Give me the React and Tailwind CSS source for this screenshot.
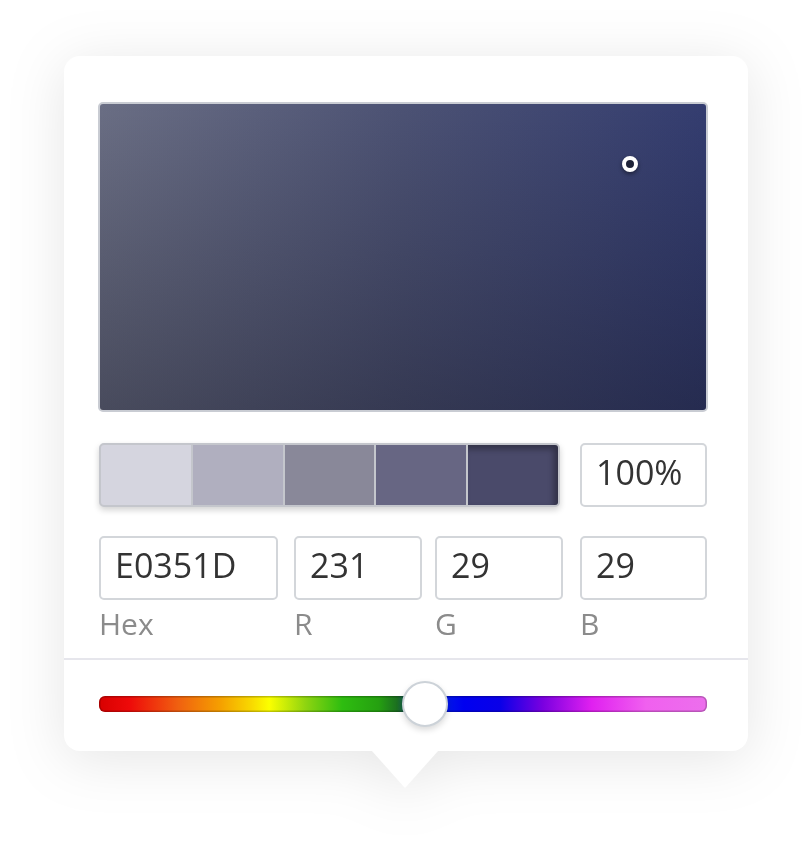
import React from 'react';

const swatches = ['#d5d5df', '#b0afbf', '#898899', '#676683', '#4a4a6a'];

const hueStops =
  'linear-gradient(to right, #d80000 0%, #ee0a0a 5%, #f06010 13%, #f5a000 20%, #f8d800 25%, #fbff00 28%, #8ed410 34%, #2ebd10 40%, #25a010 46%, #1c7020 49%, #0030e0 54%, #0000f0 60%, #0a00e8 66%, #7a00e0 73%, #e020f0 81%, #f060ef 90%, #ec6fec 100%)';

const Field = ({ value, label, width }) => (
  <div className={`flex flex-col ${width}`}>
    <div className="h-16 rounded-[5px] border-2 border-[#d3d6da] bg-white flex items-center pl-[14px] pb-[6px] text-[34px] text-[#333]">
      {value}
    </div>
    {label && <span className="mt-[6px] text-[30px] leading-[36px] text-[#8b8b8b]">{label}</span>}
  </div>
);

export default function App() {
  return (
    <div
      className="w-[812px] h-[852px] bg-white flex justify-center pt-[56px]"
      style={{ fontFamily: '"Open Sans", "Liberation Sans", sans-serif' }}
    >
      <div className="relative w-[684px] h-[732px] drop-shadow-[0_8px_28px_rgba(0,0,0,0.10)]">
        <div className="relative bg-white rounded-[16px] w-[684px] pt-[46px]">
          {/* saturation / brightness area */}
          <div className="pl-[34px] pr-[40px]">
            <div
              className="relative h-[310px] rounded-[5px] border-2 border-[#c9ccd3]"
              style={{
                background:
                  'linear-gradient(to bottom, rgba(0,0,0,0) 0%, rgba(10,10,20,0.35) 100%), linear-gradient(to right, #6a6e84 0%, #4c5274 50%, #343d70 100%)',
              }}
            >
              <div className="absolute left-[522px] top-[52px] w-[16px] h-[16px] rounded-full border-[4px] border-white bg-[#1e2238] shadow-[0_2px_4px_rgba(0,0,0,0.45)]" />
            </div>

            {/* swatches + opacity */}
            <div className="flex items-center mt-[31px] pl-[1px]">
              <div className="flex w-[461px] h-16 rounded-[5px] border-2 border-[#c4c6cc] overflow-hidden shadow-[0_3px_6px_rgba(0,0,0,0.18)] bg-[#c4c6cc] gap-[2px]">
                {swatches.map((c, i) => (
                  <div
                    key={c}
                    className={`flex-1 ${i === 4 ? 'shadow-[inset_-4px_4px_6px_rgba(0,0,0,0.35)]' : ''}`}
                    style={{ backgroundColor: c }}
                  />
                ))}
              </div>
              <div className="ml-[20px]">
                <Field value="100%" width="w-[127px]" />
              </div>
            </div>

            {/* hex / rgb */}
            <div className="flex mt-[29px] pl-[1px]">
              <Field value="E0351D" label="Hex" width="w-[179px]" />
              <div className="ml-[16px]">
                <Field value="231" label="R" width="w-[128px]" />
              </div>
              <div className="ml-[13px]">
                <Field value="29" label="G" width="w-[128px]" />
              </div>
              <div className="ml-[17px]">
                <Field value="29" label="B" width="w-[127px]" />
              </div>
            </div>
          </div>

          {/* hue slider */}
          <div className="mt-[16px] border-t-2 border-[#e6e6ec] h-[93px] pl-[35px] pr-[41px] pb-[3px] flex items-center">
            <div className="relative w-full h-[16px]">
              <div
                className="w-full h-full rounded-[6px] shadow-[inset_0_0_0_1.5px_rgba(0,0,0,0.22)]"
                style={{ background: hueStops }}
              />
              <div className="absolute left-[303px] top-[-15px] w-[46px] h-[46px] rounded-full bg-white border-2 border-[#ccd2d8] shadow-[0_3px_6px_rgba(0,0,0,0.15)]" />
            </div>
          </div>
        </div>
        {/* pointer arrow */}
        <div className="absolute left-[308px] top-[695px] w-0 h-0 border-l-[33px] border-r-[33px] border-t-[37px] border-l-transparent border-r-transparent border-t-white" />
      </div>
    </div>
  );
}
